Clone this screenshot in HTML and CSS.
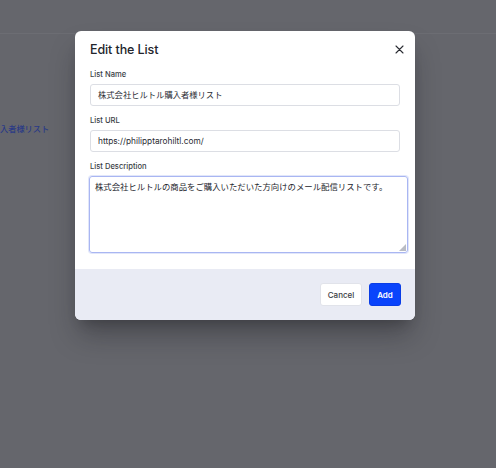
FILE: index.html
```html
<!DOCTYPE html>
<html lang="ja">
<head>
<meta charset="utf-8">
<title>Edit the List</title>
<link rel="stylesheet" href="styles.css">
</head>
<body>
<div class="page">
  <div class="topbar"></div>
  <div class="behind">
    <a class="behind-link" href="#">入者様リスト</a>
  </div>
  <div class="modal">
    <div class="modal-body">
      <div class="modal-head">
        <h2 class="modal-title">Edit the List</h2>
        <button class="close" aria-label="Close">
          <svg width="9" height="9" viewBox="0 0 9 9"><path d="M1 1L8 8M8 1L1 8" stroke="#2a2c33" stroke-width="1.1" fill="none" stroke-linecap="round"/></svg>
        </button>
      </div>
      <div class="field">
        <label class="label">List Name</label>
        <div class="input">株式会社ヒルトル購入者様リスト</div>
      </div>
      <div class="field">
        <label class="label">List URL</label>
        <div class="input">https://philipptarohiltl.com/</div>
      </div>
      <div class="field">
        <label class="label">List Description</label>
        <div class="textarea">株式会社ヒルトルの商品をご購入いただいた方向けのメール配信リストです。<span class="grip"></span></div>
      </div>
    </div>
    <div class="modal-foot">
      <button class="btn btn-cancel">Cancel</button>
      <button class="btn btn-add">Add</button>
    </div>
  </div>
</div>
</body>
</html>
```

FILE: styles.css
```css
html, body {
  margin: 0;
  padding: 0;
  background: #ffffff;
}
body {
  font-family: Inter, "Noto Sans CJK JP", sans-serif;
}
.page {
  position: relative;
  width: 496px;
  height: 468px;
  background: #65666c;
  overflow: hidden;
}
.topbar {
  height: 33px;
  border-bottom: 1px solid #6c6d73;
}
.behind {
  padding-top: 82px;
}
.behind-link {
  font-family: "Noto Sans CJK JP", sans-serif;
  font-size: 8.2px;
  line-height: 12px;
  color: #2a3a86;
  text-decoration: none;
  font-weight: 500;
}
.modal {
  position: absolute;
  left: 75px;
  top: 31px;
  width: 340px;
  height: 289px;
  background: #ffffff;
  border-radius: 6px;
  overflow: hidden;
  display: flex;
  flex-direction: column;
  box-shadow: 0 18px 28px -4px rgba(20, 20, 25, 0.35), 0 8px 12px -6px rgba(0, 0, 0, 0.2);
}
.modal-body {
  padding: 9px 15px 16px 15px;
  flex: 1;
}
.modal-head {
  display: flex;
  align-items: center;
  justify-content: space-between;
  height: 19px;
  margin-bottom: 10px;
}
.modal-title {
  margin: 0;
  font-size: 12.5px;
  font-weight: 500;
  color: #23252b;
  letter-spacing: -0.1px;
}
.close {
  border: 0;
  background: none;
  padding: 0;
  width: 14px;
  height: 14px;
  display: flex;
  align-items: center;
  justify-content: center;
  margin-right: -6px;
  cursor: pointer;
}
.field {
  display: flex;
  flex-direction: column;
  margin-bottom: 9px;
}
.field:last-child {
  margin-bottom: 0;
}
.label {
  font-size: 7.6px;
  line-height: 12px;
  font-weight: 500;
  color: #3a3d45;
  margin-bottom: 3px;
}
.input {
  box-sizing: border-box;
  width: 310px;
  height: 22px;
  border: 1px solid #dcdee4;
  border-radius: 3px;
  padding: 0 7px;
  font-size: 8.3px;
  line-height: 20px;
  color: #2a2c33;
  font-family: Inter, "Noto Sans CJK JP", sans-serif;
}
.textarea {
  position: relative;
  box-sizing: border-box;
  width: 319px;
  height: 77px;
  margin-left: -1px;
  border: 1px solid #a9b6f2;
  border-radius: 3px;
  padding: 3px 5px;
  font-size: 8.4px;
  line-height: 14px;
  color: #23252c;
  box-shadow: 0 0 0 1px rgba(169, 182, 242, 0.35);
}
.grip {
  position: absolute;
  right: 1px;
  bottom: 1px;
  width: 0;
  height: 0;
  border-left: 7px solid transparent;
  border-bottom: 7px solid #b9bcc4;
}
.modal-foot {
  height: 52px;
  background: #e9ebf4;
  display: flex;
  align-items: center;
  justify-content: flex-end;
  gap: 7px;
  padding-right: 14px;
}
.btn {
  height: 23px;
  border-radius: 3px;
  font-family: Inter, sans-serif;
  font-size: 8px;
  font-weight: 500;
  padding: 0;
  cursor: pointer;
}
.btn-cancel {
  width: 42px;
  background: #ffffff;
  border: 1px solid #e1e3ea;
  color: #3a3c44;
}
.btn-add {
  width: 32px;
  background: #0a44fb;
  border: 1px solid #0a3de6;
  color: #ffffff;
  font-weight: 600;
}
```
